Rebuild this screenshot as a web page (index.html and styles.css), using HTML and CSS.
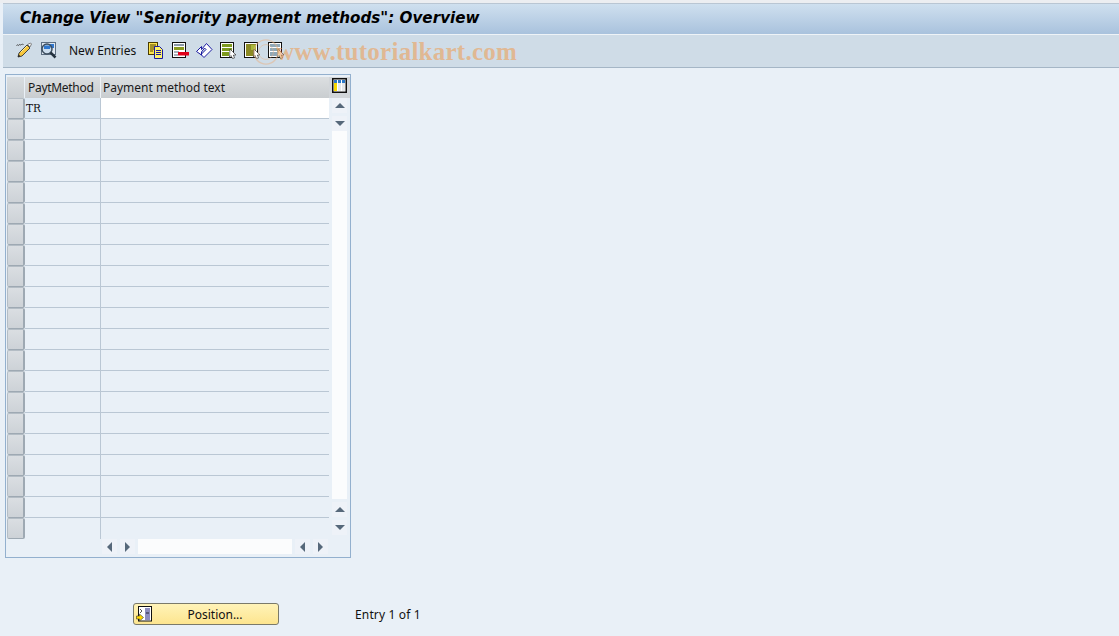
FILE: index.html
```html
<!DOCTYPE html>
<html lang="en">
<head>
<meta charset="utf-8">
<title>Change View</title>
<link rel="stylesheet" href="styles.css">
</head>
<body>
<div class="screen">
  <header class="titlebar"><h1>Change View "Seniority payment methods": Overview</h1></header>
  <nav class="toolbar">
    <svg class="ico" viewBox="0 0 18 18"><path d="M1.500 4.500c1-2 1.500 1 2.500-.5s1.500 1 2.500-.5 1 1 2 0" fill="none" stroke="#444" stroke-width="1"/><path d="M3 16l1-4 8-8 3 3-8 8z" fill="#f7c63c" stroke="#333" stroke-width=".9"/><path d="M12.500 3.500l3-1.500 1 1-1.500 3z" fill="#f4f4f4" stroke="#555" stroke-width=".7"/><path d="M6 11l6-6" stroke="#fff09a"/><path d="M3 16l.7-2.500 1.800 1.800z" fill="#222"/></svg>
    <svg class="ico" viewBox="0 0 18 18"><rect x="2.500" y="1.500" width="14" height="12" fill="#dfe8f2" stroke="#5d6f82"/><rect x="5" y="3" width="10" height="4" fill="#2f78d0"/><circle cx="8" cy="8" r="5" fill="#bcd3ea" fill-opacity=".55" stroke="#3d4f60" stroke-width="1.500"/><rect x="5" y="5" width="6" height="3" fill="#2f78d0"/><path d="M11.500 11.500l5 5" stroke="#24323f" stroke-width="2.500"/></svg>
    <span class="newentries">New Entries</span>
    <svg class="ico" viewBox="0 0 18 18"><rect x="1.500" y="1.500" width="9" height="12" fill="#ffe44d" stroke="#4a3c00"/><path d="M3 4h6M3 6h6M3 8h6M3 10h3" stroke="#4a3c00"/><path d="M7.500 5.500h5l3 3v9h-8z" fill="#fff36a" stroke="#1a1aa0"/><path d="M9 9.500h5M9 11.500h5M9 13.500h5" stroke="#1a1aa0"/></svg>
    <svg class="ico" viewBox="0 0 18 18"><rect x="1.500" y="1.500" width="13" height="15" fill="#fff" stroke="#111"/><path d="M3 4h10" stroke="#8a98a6" stroke-width="2"/><rect x="3" y="6" width="10" height="3" fill="#8a9a20"/><path d="M3 11h5M3 14h4" stroke="#8a98a6" stroke-width="1.500"/><rect x="7" y="11" width="11" height="3.500" fill="#e0001a"/></svg>
    <svg class="ico" viewBox="0 0 18 18"><path d="M1.500 10.500l5-5v3l5-6 5.500 6-8 8-3-3 5-5-1.500-1.500-3 4v3z" fill="#fff" stroke="#1a1aa0"/></svg>
    <svg class="ico" viewBox="0 0 18 18"><rect x="1.500" y="1.500" width="13" height="15" fill="#fff" stroke="#111"/><rect x="3" y="3" width="10" height="3" fill="#7d9a1e"/><rect x="3" y="7" width="10" height="3" fill="#7d9a1e"/><rect x="3" y="11" width="7" height="4" fill="#7d9a1e"/><path d="M11 8l6 6-2.500 0 1 3-2 .5-1.500-3-1.500 1.500z" fill="#fff" stroke="#222" stroke-width=".6"/></svg>
    <svg class="ico" viewBox="0 0 18 18"><rect x="1.500" y="1.500" width="13" height="15" fill="#fff" stroke="#111"/><rect x="3" y="3" width="10" height="12" fill="#8c8a24"/><rect x="8" y="4" width="5" height="5" fill="#a8b83a"/><path d="M11 8l6 6-2.500 0 1 3-2 .5-1.500-3-1.500 1.500z" fill="#fff" stroke="#222" stroke-width=".6"/></svg>
    <svg class="ico" viewBox="0 0 18 18"><rect x="1.500" y="1.500" width="13" height="15" fill="#fff" stroke="#111"/><rect x="3" y="3" width="10" height="3" fill="#8fa8b8"/><rect x="3" y="7" width="10" height="3" fill="#8fa8b8"/><rect x="3" y="11" width="7" height="4" fill="#8fa8b8"/><path d="M11 8l6 6-2.500 0 1 3-2 .5-1.500-3-1.500 1.500z" fill="#fff" stroke="#222" stroke-width=".6"/></svg>
  </nav>
  <main class="content">
    <section class="panel">
      <div class="grid">
        <div class="corner"></div><div class="colhead one">PaytMethod</div><div class="colhead two">Payment method text</div>
        <div class="config"><svg viewBox="0 0 15 15" width="15" height="15"><rect x=".75" y=".75" width="13.500" height="13.500" fill="#fff" stroke="#111" stroke-width="1.500"/><rect x="2" y="2" width="3" height="3" fill="#2b78c8"/><rect x="6" y="2" width="3" height="3" fill="#2b78c8"/><rect x="10" y="2" width="3" height="3" fill="#2b78c8"/><rect x="2" y="5" width="3" height="8" fill="#f7d900"/><rect x="6" y="5" width="3" height="8" fill="#e4e7ea"/><rect x="10" y="5" width="3" height="8" fill="#e4e7ea"/></svg></div>

        <div class="sel"></div><div class="cell key">TR</div><div class="cell input"></div>
        <div class="vscroll">
          <div class="sbtn"><i class="up"></i></div><div class="sbtn"><i class="down"></i></div>
          <div class="strack"></div>
          <div class="sbtn"><i class="up"></i></div><div class="sbtn"><i class="down"></i></div>
        </div>
        <div class="sel"></div><div class="cell"></div><div class="cell"></div>
        <div class="sel"></div><div class="cell"></div><div class="cell"></div>
        <div class="sel"></div><div class="cell"></div><div class="cell"></div>
        <div class="sel"></div><div class="cell"></div><div class="cell"></div>
        <div class="sel"></div><div class="cell"></div><div class="cell"></div>
        <div class="sel"></div><div class="cell"></div><div class="cell"></div>
        <div class="sel"></div><div class="cell"></div><div class="cell"></div>
        <div class="sel"></div><div class="cell"></div><div class="cell"></div>
        <div class="sel"></div><div class="cell"></div><div class="cell"></div>
        <div class="sel"></div><div class="cell"></div><div class="cell"></div>
        <div class="sel"></div><div class="cell"></div><div class="cell"></div>
        <div class="sel"></div><div class="cell"></div><div class="cell"></div>
        <div class="sel"></div><div class="cell"></div><div class="cell"></div>
        <div class="sel"></div><div class="cell"></div><div class="cell"></div>
        <div class="sel"></div><div class="cell"></div><div class="cell"></div>
        <div class="sel"></div><div class="cell"></div><div class="cell"></div>
        <div class="sel"></div><div class="cell"></div><div class="cell"></div>
        <div class="sel"></div><div class="cell"></div><div class="cell"></div>
        <div class="sel"></div><div class="cell"></div><div class="cell"></div>
        <div class="sel"></div><div class="cell last"></div><div class="cell last"></div>
      </div>
      <div class="hscroll">
        <div class="hbtn"><i class="left"></i></div><div class="hbtn"><i class="right"></i></div>
        <div class="htrack"></div>
        <div class="hbtn"><i class="left"></i></div><div class="hbtn"><i class="right"></i></div>
      </div>
    </section>
    <div class="actions">
      <button class="position" type="button">
        <svg class="posico" viewBox="0 0 16 16"><rect x="2.500" y=".5" width="13" height="14.500" fill="#fff" stroke="#111"/><rect x="9" y="2" width="5" height="12" fill="#8d8dc0"/><path d="M10 7h3" stroke="#223"/><path d="M4 3l2 2-2 2" fill="none" stroke="#555"/><path d="M.5 10h3V8l4 3.500-4 3.500v-2h-3z" fill="#ffd800" stroke="#333" stroke-width=".6"/></svg>
        <span>Position...</span>
      </button>
      <span class="entry">Entry 1 of 1</span>
    </div>
  </main>
  <svg class="wmlogo" viewBox="0 0 30 30"><circle cx="15" cy="15" r="13" fill="none" stroke="#eab283" stroke-width="1.500"/><circle cx="15" cy="15" r="8" fill="none" stroke="#eab283"/></svg>
  <div class="watermark">www.tutorialkart.com</div>
</div>
</body>
</html>
```
FILE: styles.css
```css
* { box-sizing: border-box; }
html, body { margin: 0; padding: 0; }
body { width: 1119px; height: 636px; overflow: hidden; background: #e9f0f7; font-family: "Liberation Sans", Arial, sans-serif; font-size: 12px; color: #000; }
.screen { position: relative; width: 1119px; height: 636px; padding: 3px 0 0 3px; background: linear-gradient(#eceef1 3px, #e9f0f7 3px); }
.titlebar { height: 31px; background: linear-gradient(#cfe0ef, #a9c2dd); border-top: 1px solid #b9c6d3; padding: 4px 0 0 17px; }
.titlebar h1 { margin: 0; font-family: "DejaVu Sans", Verdana, sans-serif; font-size: 15.170px; line-height: 20px; font-weight: bold; font-style: italic; color: #000; white-space: nowrap; }
.toolbar { height: 34px; background: #cfdce7; border-top: 1px solid #eef3f7; border-bottom: 1px solid #a5b6c6; display: flex; align-items: center; padding: 0 0 2px 12px; }
.ico { width: 18px; height: 18px; flex: none; margin-right: 6px; }
.newentries { margin: 0 11px 0 6px; font-family: "Noto Sans", sans-serif; font-size: 12px; color: #111; white-space: nowrap; }
.content { padding: 6px 0 0 2px; }
.panel { width: 346px; height: 484px; border: 1px solid #93b0ce; padding: 2px 0 0 1px; background: #e9f0f7; }
.grid { display: grid; grid-template-columns: 18px 76px 228px 21px; grid-template-rows: 21px repeat(21, 21px); }
.corner { background: linear-gradient(#d9dde0, #c9ced2); border-right: 1px solid #e9f0f7; }
.colhead { background: linear-gradient(#dcdfe1, #c9cdd0); border-right: 1px solid #eef2f6; padding: 0 0 0 3px; line-height: 21px; font-family: "Noto Sans", sans-serif; font-size: 12px; color: #1a1a1a; white-space: nowrap; overflow: hidden; }
.colhead.one { letter-spacing: -.3px; }
.colhead.two { border-right: 0; padding-left: 2px; }
.config { display: flex; align-items: flex-start; justify-content: flex-start; padding: 1px 0 0 3px; background: #d2d6da; }
.sel { background: linear-gradient(#dadee2, #cdd2d7); border-style: solid; border-width: 1px 2px 1px 1px; border-color: #b4bdc5 #9ea9b3 #9ea9b3 #b4bdc5; border-radius: 2px; }
.cell { border-bottom: 1px solid #bac7d4; border-right: 1px solid #bac7d4; }
.cell.key { background: #deeaf5; font-family: "DejaVu Serif", "Liberation Mono", serif; font-size: 10.500px; line-height: 21px; padding-left: 1px; color: #111; }
.cell.input { background: #fff; }
.cell.last { border-bottom: 0; }
.grid .cell + .cell { border-right: 0; }
.vscroll { grid-column: 4; grid-row: 2 / span 21; display: flex; flex-direction: column; align-items: flex-end; padding: 0 3px 4px 0; gap: 3px; height: 441px; }
.sbtn { width: 15px; height: 15px; background: #eef2f8; display: flex; align-items: center; justify-content: center; flex: none; }
.strack { flex: 1; width: 15px; background: #fbfcfd; margin-top: -3px; }
.up { width: 0; height: 0; border-style: solid; border-color: transparent transparent #56687a; border-width: 0 5px 5px; }
.down { width: 0; height: 0; border-style: solid; border-color: #56687a transparent transparent; border-width: 5px 5px 0; }
.left { width: 0; height: 0; border-style: solid; border-color: transparent #56687a transparent transparent; border-width: 5px 5px 5px 0; }
.right { width: 0; height: 0; border-style: solid; border-color: transparent transparent transparent #56687a; border-width: 5px 0 5px 5px; }
.hscroll { display: flex; gap: 3px; margin: 0 0 0 95px; height: 15px; width: 226px; }
.hbtn { width: 15px; height: 15px; background: #eef2f8; display: flex; align-items: center; justify-content: center; flex: none; }
.htrack { flex: 1; background: #fbfcfd; }
.actions { display: flex; align-items: center; height: 24px; margin: 44px 0 0 128px; }
.position { width: 146px; height: 22px; padding: 0 0 0 2px; border: 1px solid #7a7a6a; border-radius: 3px; background: linear-gradient(#fff3b8, #fde58f); display: flex; align-items: center; font-family: "Noto Sans", sans-serif; font-size: 12px; color: #111; }
.position span { flex: 1; text-align: center; }
.posico { width: 16px; height: 16px; flex: none; }
.entry { margin-left: 76px; font-family: "Noto Sans", sans-serif; font-size: 12px; letter-spacing: .15px; color: #111; white-space: nowrap; }
.watermark { position: absolute; left: 276px; top: 38px; font-family: "Liberation Serif", serif; font-size: 25px; font-weight: bold; line-height: 28px; color: rgba(236, 160, 90, .6); white-space: nowrap; letter-spacing: .25px; }
.wmlogo { position: absolute; left: 252px; top: 38px; width: 28px; height: 28px; opacity: .5; }
```
